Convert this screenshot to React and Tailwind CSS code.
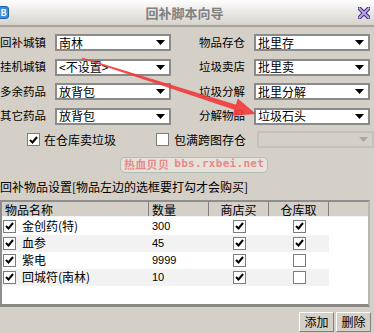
import { useState } from 'react'

const cjk = { fontFamily: '"Noto Sans CJK SC", "Liberation Sans", sans-serif' }

function Arrow({ disabled }) {
  return (
    <svg width="9" height="5" viewBox="0 0 9 5" className="shrink-0">
      <path d="M0 0h9L4.5 5z" fill={disabled ? '#a8a6a0' : '#000'} />
    </svg>
  )
}

function Select({ value, disabled }) {
  return (
    <div
      className={`flex items-center h-[17px] pl-[2px] pr-[4px] border-2 ${
        disabled ? 'border-[#c4c1ba] bg-[#d4d0c8]' : 'border-[#8a8a8a] bg-white'
      }`}
    >
      <span className="flex-1 text-[12px] leading-[12px] text-black whitespace-nowrap">{value}</span>
      <Arrow disabled={disabled} />
    </div>
  )
}

function Check({ on }) {
  return (
    <div className="w-[13px] h-[13px] border border-[#7c7c7c] bg-white flex items-center justify-center shrink-0">
      {on && (
        <svg width="9" height="8" viewBox="0 0 9 8">
          <path d="M1 4l2.5 2.5L8 1" stroke="#000" strokeWidth="2" fill="none" />
        </svg>
      )}
    </div>
  )
}

function FieldRow({ label, value }) {
  return (
    <div className="flex items-center h-[17px]">
      <div className="w-[46px] shrink-0 flex justify-end">
        <span className="text-[11.5px] whitespace-nowrap">{label}</span>
      </div>
      <div className="w-[116px] ml-[9px]">
        <Select value={value} />
      </div>
    </div>
  )
}

const items = [
  { name: '金创药(特)', qty: '300', buy: true, take: true },
  { name: '血参', qty: '45', buy: true, take: true },
  { name: '紫电', qty: '9999', buy: true, take: false },
  { name: '回城符(南林)', qty: '10', buy: true, take: false },
]

export default function App() {
  const [rows] = useState(items)

  return (
    <div className="w-[374px] h-[333px] bg-[#d4d0c8] relative overflow-hidden text-black" style={cjk}>
      {/* title bar */}
      <div className="h-[27px] flex items-center bg-gradient-to-b from-[#fefefe] to-[#d6d3cd] border-b-2 border-[#a8a49c]">
        <div className="w-[11px] h-[13px] -ml-[2px] rounded-[3px] bg-[#3d8ee0] border border-[#1d5fa8] flex items-center justify-center text-white text-[9px] font-bold leading-none">
          B
        </div>
        <div className="flex-1 text-center text-[13px] font-bold text-[#808080] pl-[2px]">回补脚本向导</div>
        <div className="w-[12px] h-[12px] mr-[4px] flex items-center justify-center">
          <svg width="12" height="12" viewBox="0 0 12 12">
            <path d="M1.5 1.5l9 9M10.5 1.5l-9 9" stroke="#3c2a6e" strokeWidth="4" strokeLinecap="square" />
            <path d="M1.5 1.5l9 9M10.5 1.5l-9 9" stroke="#b9a3ef" strokeWidth="2" strokeLinecap="square" />
          </svg>
        </div>
      </div>

      {/* form fields */}
      <div className="flex mt-[7px]">
        <div className="flex flex-col gap-[7.5px]">
          <FieldRow label="回补城镇" value="南林" />
          <FieldRow label="挂机城镇" value="<不设置>" />
          <FieldRow label="多余药品" value="放背包" />
          <FieldRow label="其它药品" value="放背包" />
        </div>
        <div className="flex flex-col gap-[7.5px] ml-[28px]">
          <FieldRow label="物品存仓" value="批里存" />
          <FieldRow label="垃圾卖店" value="批里卖" />
          <FieldRow label="垃圾分解" value="批里分解" />
          <FieldRow label="分解物品" value="垃圾石头" />
        </div>
      </div>

      {/* checkbox row */}
      <div className="flex items-center mt-[6px] h-[18px]">
        <div className="flex items-center ml-[27px] gap-[4px]">
          <Check on />
          <span className="text-[12px]">在仓库卖垃圾</span>
        </div>
        <div className="flex items-center ml-[40px] gap-[5px]">
          <Check />
          <span className="text-[12px]">包满跨图存仓</span>
        </div>
        <div className="w-[117px] ml-[11px]">
          <Select value="" disabled />
        </div>
      </div>

      {/* watermark */}
      <div className="flex mt-[8px] ml-[120px]">
        <div className="h-[16px] px-[3px] flex items-center rounded-[5px] border border-[#b0bcb6] bg-[#e6e2da] text-[11px] font-bold text-[#e6898a] tracking-[0.3px]">
          热血贝贝 <span className="ml-[5px]" style={{ fontFamily: '"DejaVu Sans Mono", monospace' }}>bbs.rxbei.net</span>
        </div>
      </div>

      {/* section title */}
      <div className="text-[12px] leading-[14px] mt-[7px] whitespace-nowrap">回补物品设置[物品左边的选框要打勾才会购买]</div>

      {/* table */}
      <div className="mt-[6px] w-[370px] h-[107px] bg-white border-l-2 border-t-2 border-[#8e8e8e] border-r-2 border-r-[#b8b6b0] border-b-[3px] border-b-[#8c8a86] overflow-hidden">
        <div className="flex h-[15px] bg-[#d4d0c8] text-[12px] leading-[15px] border-b border-[#f4f4f4]">
          <div className="w-[147px] pl-[3px] border-r border-[#808080]">物品名称</div>
          <div className="w-[60px] pl-[3px] border-r border-[#808080]">数量</div>
          <div className="w-[60px] text-center border-r border-[#808080]">商店买</div>
          <div className="w-[60px] text-center border-r border-[#808080]">仓库取</div>
          <div className="flex-1" />
        </div>
        <div className="mt-[1px]">
          {rows.map((r, i) => (
            <div key={r.name} className={`flex items-center h-[17px] w-[327px] ${i % 2 ? 'bg-[#f2f2f2]' : 'bg-white'}`}>
              <div className="w-[147px] flex items-center gap-[6px] pl-[1px]">
                <Check on />
                <span className="text-[12px] whitespace-nowrap">{r.name}</span>
              </div>
              <div className="w-[60px] pl-[3px] text-[11px]" style={{ fontFamily: '"Liberation Sans", sans-serif' }}>
                {r.qty}
              </div>
              <div className="w-[60px] flex justify-center">
                <Check on={r.buy} />
              </div>
              <div className="w-[60px] flex justify-center">
                <Check on={r.take} />
              </div>
            </div>
          ))}
        </div>
      </div>

      {/* buttons */}
      <div className="flex justify-end gap-[2px] mt-[5px] pr-[3px]">
        <button className="w-[35px] h-[20px] text-[12px] leading-[16px] bg-[#d4d0c8] border border-t-white border-l-white border-r-[#808080] border-b-[#808080]">添加</button>
        <button className="w-[35px] h-[20px] text-[12px] leading-[16px] bg-[#d4d0c8] border border-t-white border-l-white border-r-[#808080] border-b-[#808080]">删除</button>
      </div>

      {/* red annotation arrow */}
      <svg className="absolute left-0 top-0 pointer-events-none" width="374" height="333" viewBox="0 0 374 333">
        <polygon points="82,57.5 237,105 235,110 82,58.8" fill="#ef3a3a" opacity="0.9" />
        <polygon points="256,114 237.9,98.6 232.3,115.8" fill="#ef3a3a" opacity="0.9" />
      </svg>
    </div>
  )
}
